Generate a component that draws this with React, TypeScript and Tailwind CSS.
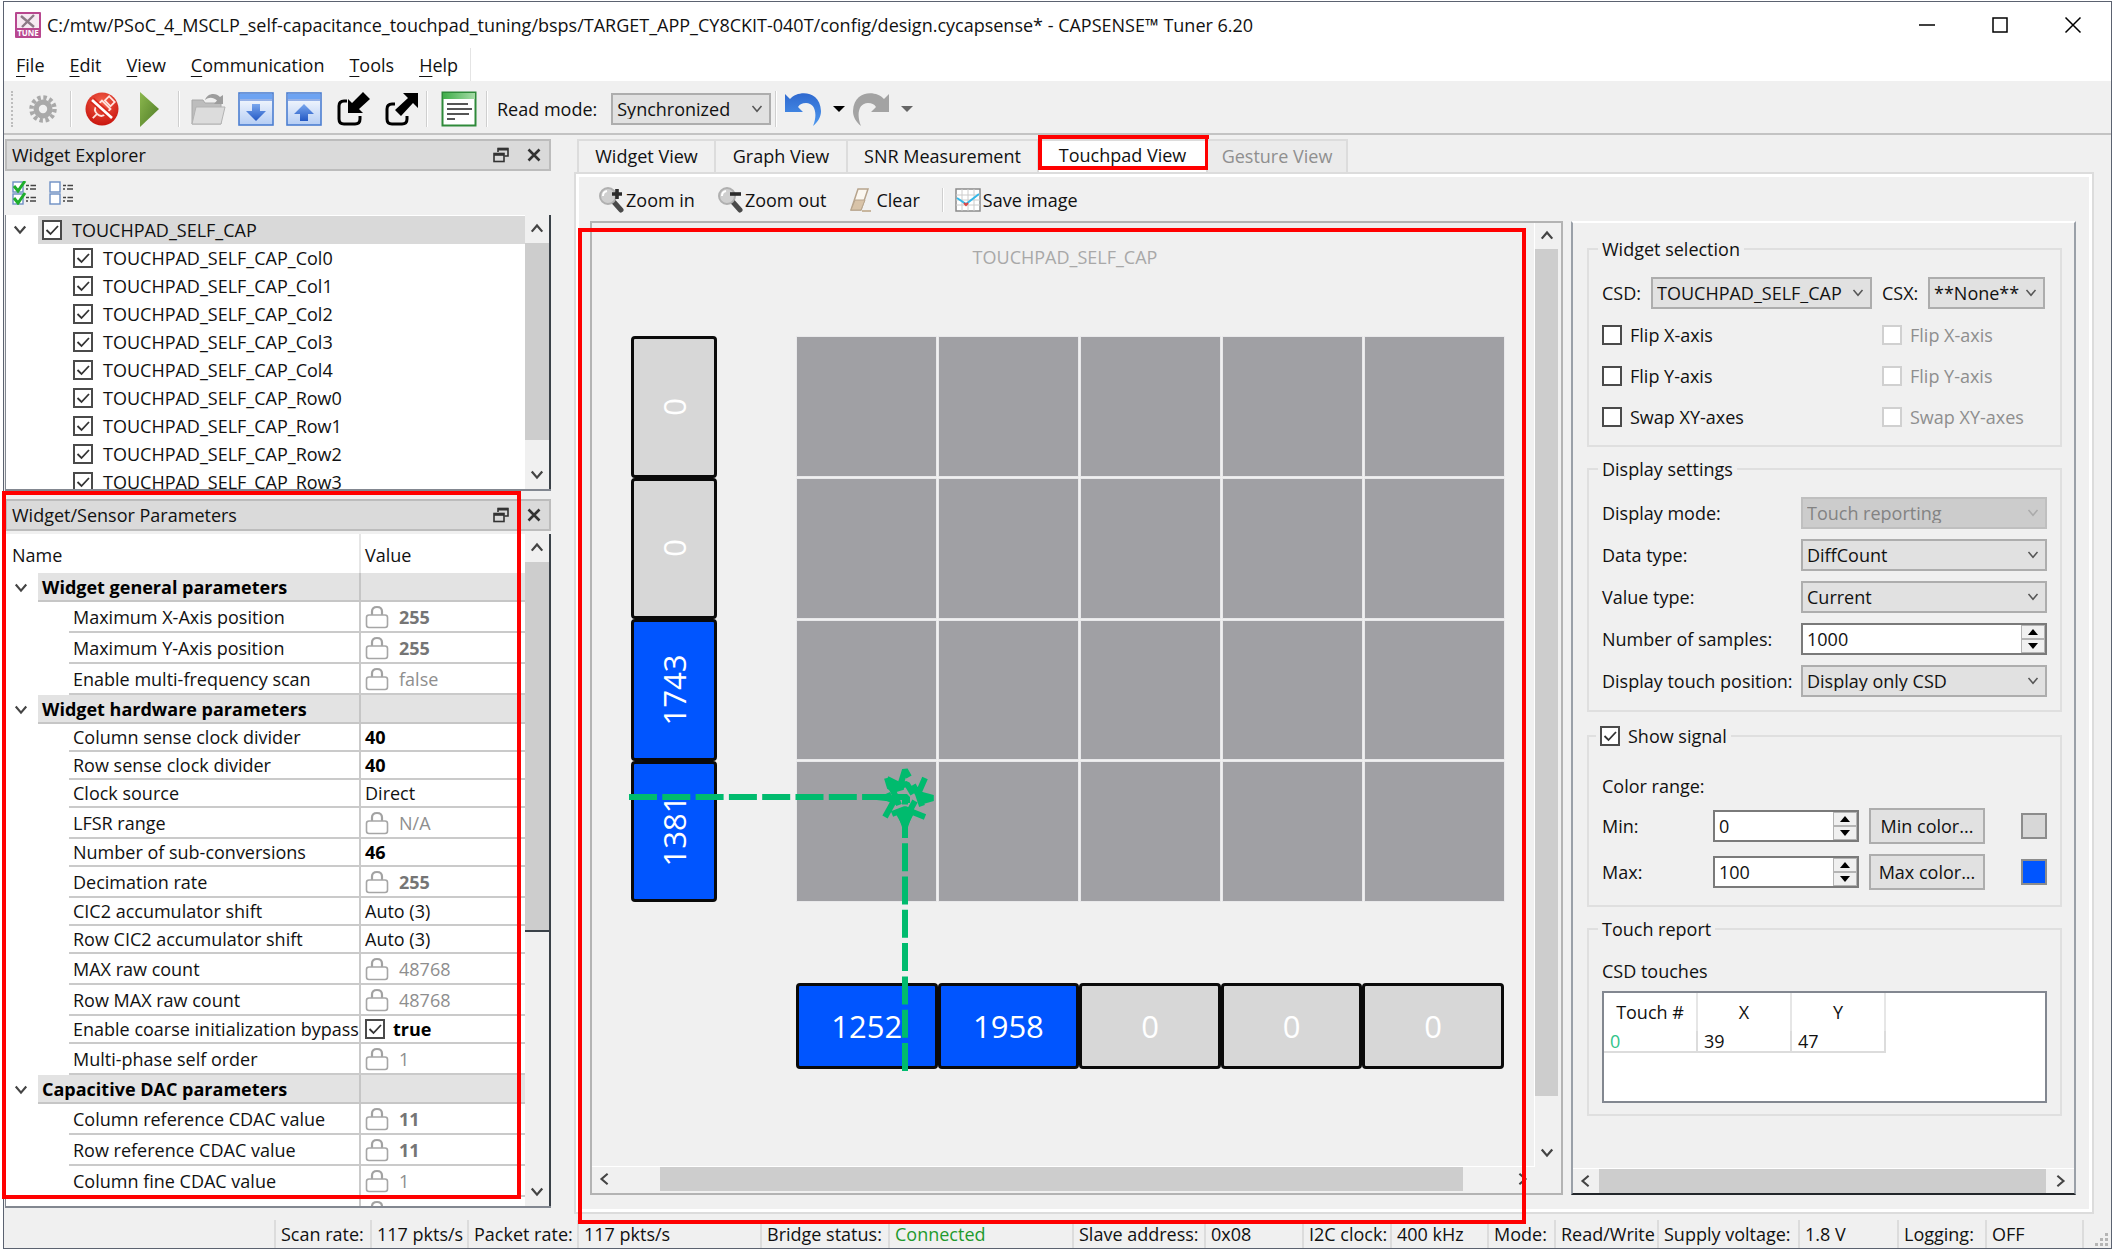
import { useState, type ReactNode } from "react";

/* ---------- small shared pieces ---------- */

type Dir = "up" | "down" | "left" | "right";

const CHEVRONS: Record<Dir, string> = {
  up: "M2 11 L8 4 L14 11",
  down: "M2 4 L8 11 L14 4",
  left: "M11 2 L4 8 L11 14",
  right: "M5 2 L12 8 L5 14",
};

function Chevron({ dir, className, width = 2 }: { dir: Dir; className: string; width?: number }) {
  return (
    <svg viewBox="0 0 16 16" className={className} fill="none" stroke="currentColor" strokeWidth={width} aria-hidden="true">
      <path d={CHEVRONS[dir]} />
    </svg>
  );
}

function Check({
  label,
  checked = false,
  disabled = false,
  className = "",
  labelClass = "",
}: {
  label: string;
  checked?: boolean;
  disabled?: boolean;
  className?: string;
  labelClass?: string;
}) {
  const [on, setOn] = useState(checked);
  return (
    <label className={`flex items-center ${disabled ? "text-[#8e8e8e]" : ""} ${className}`}>
      <span className="relative block h-5 w-5 shrink-0">
        <input
          type="checkbox"
          checked={on}
          disabled={disabled}
          onChange={() => setOn(!on)}
          className="block h-5 w-5 appearance-none border-2 border-[#4a4a4a] bg-white disabled:border-[#d0d0d0]"
        />
        {on && (
          <svg viewBox="0 0 20 20" className="pointer-events-none absolute inset-0 h-5 w-5" fill="none" stroke="#333" strokeWidth="1.8" aria-hidden="true">
            <path d="M4.5 10 L8.5 14 L16 6" />
          </svg>
        )}
      </span>
      <span className={`whitespace-nowrap ${labelClass}`}>{label}</span>
    </label>
  );
}

function Select({ label, value, options = [], disabled = false, className = "" }: { label: string; value: string; options?: string[]; disabled?: boolean; className?: string }) {
  return (
    <span className={`relative block h-8 ${className}`}>
      <select
        aria-label={label}
        disabled={disabled}
        defaultValue={value}
        className="block h-full w-full appearance-none border-2 border-[#adadad] bg-[#e1e1e1] pl-1 text-lg leading-5 disabled:border-[#bfbfbf] disabled:bg-[#cccccc] disabled:text-[#838383] disabled:opacity-100"
      >
        <option>{value}</option>
        {options.map((o) => (
          <option key={o}>{o}</option>
        ))}
      </select>
      <Chevron dir="down" width={2} className={`pointer-events-none absolute top-2.5 right-2 h-3 w-3 ${disabled ? "text-[#aaa]" : "text-[#555]"}`} />
    </span>
  );
}

function Spin({ label, value, className = "" }: { label: string; value: string; className?: string }) {
  const [v, setV] = useState(value);
  const step = (d: number) => setV(String(Number(v) + d));
  return (
    <span className={`flex h-8 border-2 border-[#7a7a7a] bg-white ${className}`}>
      <input aria-label={label} value={v} onChange={(e) => setV(e.target.value)} className="min-w-0 flex-1 bg-transparent pl-1 text-lg leading-5 outline-none" />
      <span className="flex w-6 flex-col">
        <button type="button" aria-label={`${label} up`} onClick={() => step(1)} className="flex flex-1 items-center justify-center border border-[#b4b4b4] bg-[#f0f0f0]">
          <svg viewBox="0 0 10 6" className="h-1.5 w-2.5" aria-hidden="true"><path d="M0 6 L5 0 L10 6Z" /></svg>
        </button>
        <button type="button" aria-label={`${label} down`} onClick={() => step(-1)} className="flex flex-1 items-center justify-center border border-[#b4b4b4] bg-[#f0f0f0]">
          <svg viewBox="0 0 10 6" className="h-1.5 w-2.5" aria-hidden="true"><path d="M0 0 L5 6 L10 0Z" /></svg>
        </button>
      </span>
    </span>
  );
}

function Highlight({ className }: { className: string }) {
  return <div className={`pointer-events-none absolute border-4 border-[#ff0000] ${className}`} />;
}

/* ---------- title, menu, toolbar ---------- */

function TitleBar() {
  return (
    <header className="flex h-[46px] items-center bg-white pr-[29px] pl-[11px]">
      <svg viewBox="0 0 26 26" className="h-[26px] w-[26px] shrink-0" aria-hidden="true">
        <rect width="26" height="26" rx="1" fill="#b8478f" />
        <rect x="2" y="2" width="22" height="14" fill="#f6eaf2" />
        <path d="M6 4 L19 15 M19 3 L7 15" stroke="#8c7a86" strokeWidth="2.4" />
        <text x="13" y="24" textAnchor="middle" fontSize="8" fontWeight="700" fill="#fff" fontFamily="Open Sans">TUNE</text>
      </svg>
      <h1 className="ml-1.5 flex-1 whitespace-nowrap">
        C:/mtw/PSoC_4_MSCLP_self-capacitance_touchpad_tuning/bsps/TARGET_APP_CY8CKIT-040T/config/design.cycapsense* - CAPSENSE™ Tuner 6.20
      </h1>
      <div className="flex gap-[55px]">
        <button type="button" aria-label="Minimize" className="h-[18px] w-[18px]">
          <svg viewBox="0 0 18 18" stroke="#000" strokeWidth="1.5"><path d="M1 9H17" /></svg>
        </button>
        <button type="button" aria-label="Maximize" className="h-[18px] w-[18px]">
          <svg viewBox="0 0 18 18" stroke="#000" strokeWidth="1.5" fill="none"><rect x="2" y="2" width="14" height="14" /></svg>
        </button>
        <button type="button" aria-label="Close" className="h-[18px] w-[18px]">
          <svg viewBox="0 0 18 18" stroke="#000" strokeWidth="1.5"><path d="M1.5 1.5 L16.5 16.5 M16.5 1.5 L1.5 16.5" /></svg>
        </button>
      </div>
    </header>
  );
}

function MenuBar() {
  const items = ["File", "Edit", "View", "Communication", "Tools", "Help"];
  return (
    <nav className="flex h-[33px] bg-white pl-3">
      <div className="flex items-center gap-[25px] border-r border-[#e4e4e4] pr-3">
        {items.map((m) => (
          <button key={m} type="button" className="whitespace-nowrap">
            <span className="underline decoration-1 underline-offset-4">{m[0]}</span>
            {m.slice(1)}
          </button>
        ))}
      </div>
    </nav>
  );
}

function ToolButton({ label, children, className = "" }: { label: string; children: ReactNode; className?: string }) {
  return (
    <button type="button" aria-label={label} className={`h-9 w-9 shrink-0 ${className}`}>
      <svg viewBox="0 0 36 36" className="h-9 w-9" fill="none" aria-hidden="true">{children}</svg>
    </button>
  );
}

function Divider({ className = "" }: { className?: string }) {
  return <span className={`w-0.5 shrink-0 border-l border-[#cfcfcf] bg-white ${className}`} />;
}

function WindowGlyph() {
  return (
    <>
      <rect x="1" y="2" width="34" height="32" fill="url(#panelBlue)" stroke="#4d7fd1" strokeWidth="1.6" />
      <rect x="2" y="3" width="32" height="5" fill="#6da3f2" />
      <path d="M2 9H34" stroke="#3f6fd0" />
    </>
  );
}

function Toolbar() {
  return (
    <div className="flex h-[54px] shrink-0 items-center border-b-2 border-[#c3c3c3] pt-1 pl-[7px]">
      <svg width="0" height="0" className="absolute" aria-hidden="true">
        <defs>
          <linearGradient id="panelBlue" x1="0" y1="0" x2="0" y2="1"><stop offset="0" stopColor="#fff" /><stop offset="1" stopColor="#b5cdf4" /></linearGradient>
          <linearGradient id="arrowBlue" x1="0" y1="0" x2="0" y2="1"><stop offset="0" stopColor="#79a7ee" /><stop offset="1" stopColor="#2358c4" /></linearGradient>
          <radialGradient id="stopRed" cx="0.5" cy="0.3" r="0.7"><stop offset="0" stopColor="#f4604a" /><stop offset="1" stopColor="#c9150e" /></radialGradient>
          <linearGradient id="playGreen" x1="0" y1="0" x2="1" y2="1"><stop offset="0" stopColor="#8cb84e" /><stop offset="1" stopColor="#4e7a26" /></linearGradient>
          <linearGradient id="docGreen" x1="0" y1="0" x2="1" y2="0"><stop offset="0" stopColor="#3fae49" /><stop offset="1" stopColor="#a5dba6" /></linearGradient>
          <linearGradient id="undoBlue" x1="0" y1="0" x2="0" y2="1"><stop offset="0" stopColor="#2f69cf" /><stop offset="1" stopColor="#4c97ee" /></linearGradient>
        </defs>
      </svg>
      <span className="h-9 border-l-2 border-dotted border-[#bdbdbd]" />
      <ToolButton label="Settings" className="ml-3">
        <circle cx="18" cy="18" r="9.5" fill="#a9a9a9" />
        <circle cx="18" cy="18" r="11.5" stroke="#a9a9a9" strokeWidth="4.5" strokeDasharray="3.4 2.62" />
        <circle cx="18" cy="18" r="4.2" fill="#f0f0f0" />
      </ToolButton>
      <Divider className="ml-[9px] h-9" />
      <ToolButton label="Disconnect" className="ml-3">
        <circle cx="18" cy="18" r="16.5" fill="url(#stopRed)" />
        <g transform="rotate(45 18 18)" stroke="#ffe3de" strokeWidth="1.8">
          <rect x="14" y="4" width="8" height="6" />
          <path d="M12 12 H24 V19 Q24 25 18 25 Q12 25 12 19Z M18 25V31" />
        </g>
        <path d="M8 9 L28 27" stroke="#d8281c" strokeWidth="6" />
        <path d="M8 9 L28 27" stroke="#fff" strokeWidth="2.6" />
      </ToolButton>
      <ToolButton label="Start" className="ml-4">
        <path d="M4 1 L23 18 L4 36Z" fill="url(#playGreen)" />
      </ToolButton>
      <Divider className="ml-[6px] h-9" />
      <ToolButton label="Open" className="ml-[10px]">
        <path d="M2 33 V9 H13 L15 12 H31 V33Z" fill="#bdbdbd" stroke="#a8a8a8" />
        <path d="M2 33 L6 16 H35 L31 33Z" fill="#dcdcdc" stroke="#b3b3b3" />
        <path d="M15 9 C17 2 26 1 30 6 L33 4 V13 H24 L27 9.500 C23 6 19 6 15 9Z" fill="#9d9d9d" />
      </ToolButton>
      <ToolButton label="Read from device" className="ml-3">
        <WindowGlyph />
        <path d="M14 13 H22 V20 H28 L18 30 L8 20 H14Z" fill="url(#arrowBlue)" />
      </ToolButton>
      <ToolButton label="Write to device" className="ml-3">
        <WindowGlyph />
        <path d="M14 30 H22 V23 H28 L18 13 L8 23 H14Z" fill="url(#arrowBlue)" />
      </ToolButton>
      <ToolButton label="Import" className="ml-[13px]">
        <path d="M12 10 H9 Q4 10 4 15 V28 Q4 33 9 33 H20 Q25 33 25 28 V25" stroke="#000" strokeWidth="3" />
        <path d="M28 1 L35 8 L24 18 L28 22 H13 V8 L17 12Z" fill="#000" />
      </ToolButton>
      <ToolButton label="Export" className="ml-3">
        <path d="M12 13 H9 Q4 13 4 18 V28 Q4 33 9 33 H19 Q24 33 24 28 V25" stroke="#000" strokeWidth="3" />
        <path d="M12 19 L25 7 L20 2 H35 V17 L30 12 L18 25Z" fill="#000" />
      </ToolButton>
      <Divider className="ml-[7px] h-9" />
      <ToolButton label="Log" className="ml-[13px]">
        <rect x="1.500" y="1.500" width="33" height="33" fill="#fff" stroke="#2f8a3a" strokeWidth="2" />
        <rect x="2" y="2" width="32" height="6" fill="url(#docGreen)" />
        <path d="M6 13H27 M6 18H31 M6 23H28 M6 28H14" stroke="#555" strokeWidth="2.2" />
      </ToolButton>
      <Divider className="ml-[9px] h-9" />
      <label htmlFor="read-mode" className="ml-[9px] whitespace-nowrap">Read mode:</label>
      <span className="relative ml-3.5 block h-8 w-[160px] shrink-0">
        <select id="read-mode" className="block h-full w-full appearance-none border-2 border-[#adadad] bg-[#e1e1e1] pl-1 text-lg leading-5">
          <option>Synchronized</option>
          <option>Asynchronous</option>
        </select>
        <Chevron dir="down" className="pointer-events-none absolute top-2.5 right-2 h-3 w-3 text-[#555]" />
      </span>
      <Divider className="ml-1 h-9" />
      <ToolButton label="Undo" className="ml-2">
        <path d="M0 3 L5 8 C13 -1 35 -1 36 20 C36 26 33 31 28 35 C33 23 30 12 21 12 C17 12 15 13 13 16 L18 21 H0Z" fill="url(#undoBlue)" />
      </ToolButton>
      <svg viewBox="0 0 12 6" className="ml-3 h-1.5 w-3 shrink-0" aria-hidden="true"><path d="M0 0H12L6 6Z" /></svg>
      <ToolButton label="Redo" className="ml-2">
        <path d="M36 3 L31 8 C23 -1 1 -1 0 20 C0 26 3 31 8 35 C3 23 6 12 15 12 C19 12 21 13 23 16 L18 21 H36Z" fill="#a3a3a3" />
      </ToolButton>
      <svg viewBox="0 0 12 6" className="ml-3 h-1.5 w-3 shrink-0" aria-hidden="true"><path d="M0 0H12L6 6Z" fill="#666" /></svg>
    </div>
  );
}

/* ---------- left column ---------- */

function DockTitle({ title }: { title: string }) {
  return (
    <div className="flex h-8 shrink-0 items-center border-2 border-[#bcbcbc] bg-[#dadada] pr-2 pl-[5px]">
      <h2 className="flex-1 whitespace-nowrap">{title}</h2>
      <button type="button" aria-label={`Float ${title}`} className="h-4 w-4">
        <svg viewBox="0 0 16 16" fill="none" stroke="#333" strokeWidth="1.6">
          <path d="M5 5 V1.500 H15 V9 H11.500" /><path d="M5 2.200H15" strokeWidth="2.600" />
          <rect x="1" y="6.500" width="10" height="8" /><path d="M1 7.500H11" strokeWidth="2.600" />
        </svg>
      </button>
      <button type="button" aria-label={`Close ${title}`} className="ml-[18px] h-3.5 w-3.5">
        <svg viewBox="0 0 14 14" stroke="#333" strokeWidth="2.600"><path d="M1.500 1.500L12.500 12.500M12.500 1.500L1.500 12.500" /></svg>
      </button>
    </div>
  );
}

function ListIcon({ checked }: { checked: boolean }) {
  return (
    <svg viewBox="0 0 25 24" className="h-6 w-[25px]" fill="none" aria-hidden="true">
      {[1, 13].map((y) => (
        <g key={y}>
          <rect x="1" y={y} width="10" height="10" fill="#fff" stroke="#6d8fc4" strokeWidth="1.4" />
          <path d={`M14 ${y + 3.500}H17 M18.500 ${y + 3.500}H24 M14 ${y + 7}H16 M18 ${y + 7}H24`} stroke="#444" strokeWidth="1.600" />
          {checked && <path d={`M2 ${y + 4}L6 ${y + 9}L13 ${y - 1}`} stroke="#1fae2c" strokeWidth="3" />}
        </g>
      ))}
    </svg>
  );
}

function VScroll({ thumb }: { thumb: string }) {
  return (
    <div className="flex w-[26px] shrink-0 flex-col border-r-2 border-[#3a4148] bg-[#f0f0f0]">
      <button type="button" aria-label="Scroll up" className="flex h-7 shrink-0 items-center justify-center">
        <Chevron dir="up" width={2.600} className="h-3.5 w-3.5 text-[#444]" />
      </button>
      <div className={`bg-[#cdcdcd] ${thumb}`} />
      <div className="flex-1" />
      <button type="button" aria-label="Scroll down" className="flex h-7 shrink-0 items-center justify-center">
        <Chevron dir="down" width={2.600} className="h-3.5 w-3.5 text-[#444]" />
      </button>
    </div>
  );
}

const SENSORS = ["Col0", "Col1", "Col2", "Col3", "Col4", "Row0", "Row1", "Row2", "Row3"];

function WidgetExplorer() {
  return (
    <section className="shrink-0">
      <DockTitle title="Widget Explorer" />
      <div className="flex h-11 items-center gap-3 pl-[7px]">
        <button type="button" aria-label="Check all"><ListIcon checked /></button>
        <button type="button" aria-label="Uncheck all"><ListIcon checked={false} /></button>
      </div>
      <div className="flex h-[276px] overflow-hidden border-b-2 border-l border-[#828790] bg-white">
        <ul className="min-w-0 flex-1 overflow-hidden pt-px">
          <li className="flex h-7 items-center">
            <span className="flex w-8 shrink-0 justify-center pr-1"><Chevron dir="down" width={2.600} className="h-3.5 w-3.5 text-[#444]" /></span>
            <Check label="TOUCHPAD_SELF_CAP" checked className="h-full flex-1 bg-[#d9d9d9] pl-1" labelClass="pl-2.5" />
          </li>
          {SENSORS.map((s) => (
            <li key={s} className="h-7">
              <Check label={`TOUCHPAD_SELF_CAP_${s}`} checked className="h-full pl-[67px]" labelClass="pl-2.5" />
            </li>
          ))}
        </ul>
        <VScroll thumb="h-[197px]" />
      </div>
    </section>
  );
}

type Param = { name: string; value: string; kind?: "lock" | "check" | "group"; bold?: boolean };

const PARAMS: Param[] = [
  { name: "Widget general parameters", value: "", kind: "group" },
  { name: "Maximum X-Axis position", value: "255", kind: "lock", bold: true },
  { name: "Maximum Y-Axis position", value: "255", kind: "lock", bold: true },
  { name: "Enable multi-frequency scan", value: "false", kind: "lock" },
  { name: "Widget hardware parameters", value: "", kind: "group" },
  { name: "Column sense clock divider", value: "40", bold: true },
  { name: "Row sense clock divider", value: "40", bold: true },
  { name: "Clock source", value: "Direct" },
  { name: "LFSR range", value: "N/A", kind: "lock" },
  { name: "Number of sub-conversions", value: "46", bold: true },
  { name: "Decimation rate", value: "255", kind: "lock", bold: true },
  { name: "CIC2 accumulator shift", value: "Auto (3)" },
  { name: "Row CIC2 accumulator shift", value: "Auto (3)" },
  { name: "MAX raw count", value: "48768", kind: "lock" },
  { name: "Row MAX raw count", value: "48768", kind: "lock" },
  { name: "Enable coarse initialization bypass", value: "true", kind: "check", bold: true },
  { name: "Multi-phase self order", value: "1", kind: "lock" },
  { name: "Capacitive DAC parameters", value: "", kind: "group" },
  { name: "Column reference CDAC value", value: "11", kind: "lock", bold: true },
  { name: "Row reference CDAC value", value: "11", kind: "lock", bold: true },
  { name: "Column fine CDAC value", value: "1", kind: "lock" },
  { name: "", value: "", kind: "lock" },
];

function LockIcon() {
  return (
    <svg viewBox="0 0 24 24" className="h-6 w-6 shrink-0" fill="none" aria-hidden="true">
      <path d="M7 10 V6.500 Q7 2 12 2 Q17 2 17 6.500 V10" stroke="#a2a2a2" strokeWidth="2.200" />
      <rect x="1.500" y="10" width="21" height="12.500" rx="2.500" fill="#fff" stroke="#a6a6a6" strokeWidth="1.600" />
    </svg>
  );
}

function ParamRow({ p }: { p: Param }) {
  if (p.kind === "group") {
    return (
      <tr className="h-[29px]">
        <td><Chevron dir="down" width={2.400} className="ml-2 h-3.5 w-3.5 text-[#444]" /></td>
        <th colSpan={2} scope="rowgroup" className="border-b-2 border-[#c6c6c6] bg-[#e3e3e3] pl-1 text-left font-bold whitespace-nowrap text-black">{p.name}</th>
        <td className="border-b-2 border-l-2 border-[#c6c6c6] bg-[#e3e3e3]" />
      </tr>
    );
  }
  const tone = p.kind === "lock" ? (p.bold ? "font-bold text-[#757575]" : "text-[#8e8e8e]") : p.bold ? "font-bold text-black" : "";
  return (
    <tr className={p.kind === "lock" ? "h-[31px]" : "h-7"}>
      <td colSpan={2} />
      <td className="border-b-2 border-[#cacaca] pl-1 whitespace-nowrap">{p.name}</td>
      <td className={`border-b-2 border-l-2 border-[#cacaca] pl-1 whitespace-nowrap ${tone}`}>
        {p.kind === "lock" ? (
          <span className="flex h-6 items-center gap-2.5"><LockIcon />{p.value}</span>
        ) : p.kind === "check" ? (
          <Check label={p.value} checked labelClass="pl-2" />
        ) : (
          p.value
        )}
      </td>
    </tr>
  );
}

function ParametersPanel() {
  return (
    <section className="relative mt-2 flex min-h-0 flex-1 flex-col">
      <DockTitle title="Widget/Sensor Parameters" />
      <div className="mt-[3px] flex min-h-0 flex-1 border-b-2 border-l border-[#828790] bg-white">
        <div className="min-w-0 flex-1 overflow-hidden">
          <table className="w-full table-fixed border-separate border-spacing-0">
            <colgroup>
              <col className="w-8" />
              <col className="w-[31px]" />
              <col className="w-[290px]" />
              <col />
            </colgroup>
            <thead>
              <tr className="h-[39px]">
                <th colSpan={3} scope="col" className="pt-0.5 pl-1.5 text-left font-normal">Name</th>
                <th scope="col" className="border-l-2 border-[#e6e6e6] pt-0.5 pl-1 text-left font-normal">Value</th>
              </tr>
            </thead>
            <tbody>
              {PARAMS.map((p) => (
                <ParamRow key={p.name} p={p} />
              ))}
            </tbody>
          </table>
        </div>
        <VScroll thumb="h-[370px] border-b-2 border-[#3a4148]" />
      </div>
      <Highlight className="-top-2 bottom-[9px] -left-[3px] w-[519px]" />
    </section>
  );
}

/* ---------- touchpad canvas ---------- */

function Sensor({ value, vertical = false }: { value: string; vertical?: boolean }) {
  const active = Number(value) > 0;
  return (
    <div
      className={`flex items-center justify-center rounded-sm border-3 border-[#0a0a0a] text-[31px] leading-9 text-white ${
        active ? "bg-[#0055ff]" : "bg-[#d7d7d7]"
      } ${vertical ? "" : "h-[86px]"}`}
    >
      <span className={vertical ? "-rotate-90" : ""}>{value}</span>
    </div>
  );
}

function TouchpadPlot() {
  return (
    <div className="min-w-0 flex-1 overflow-hidden">
      <p className="pt-[22px] pl-1 text-center text-[#a8a8a8]">TOUCHPAD_SELF_CAP</p>
      <div className="relative mt-[67px] ml-[39px] grid w-[873px] grid-cols-[86px_708px] justify-between gap-y-[81px]">
        <div className="grid h-[566px] grid-rows-4">
          {["0", "0", "1743", "1381"].map((v, i) => (
            <Sensor key={i} value={v} vertical />
          ))}
        </div>
        <div className="grid grid-cols-5 grid-rows-4 gap-[3px] py-px pl-px">
          {Array.from({ length: 20 }, (_, i) => (
            <div key={i} className="bg-[#a0a0a4] outline-1 outline-[#e8e8ea]" />
          ))}
        </div>
        <div />
        <div className="grid grid-cols-5">
          {["1252", "1958", "0", "0", "0"].map((v, i) => (
            <Sensor key={i} value={v} />
          ))}
        </div>
        <svg viewBox="-2 0 480 736" className="pointer-events-none absolute top-0 -left-0.5 h-[736px] w-[480px]" fill="none" stroke="#00bb6e" aria-hidden="true">
          <path d="M-2 461H276" strokeWidth="6" strokeDasharray="28 5.300" />
          <path d="M274 735V461" strokeWidth="6" strokeDasharray="28 5.300" />
          <g transform="translate(274 461)" strokeWidth="6" strokeLinejoin="bevel">
            <path d="M-5 -11 L0 -27 L4 -20 M-18 -19 L-15 -9 L2 -13 L8 -3 M-18 -18 L-2 -10 L-12 -7 M20 -19 L13 -3 L17 9 M8 -12 L13 -3 L28 1 L14 5" />
            <path d="M-28 0 L-10 2 L-20 20 M-16 -14 L-10 -2 L-6 8 M-13 17 L0 12 L20 20 M-8 13 L0 27 L8 12 M10 4 L4 15 M-4 0 H2 V6" />
            <path d="M-26 0 L-15 -5 L-8 8 L-16 5Z M-9 13 H9 L3 30 H-3Z" fill="#00bb6e" stroke="none" />
          </g>
        </svg>
      </div>
    </div>
  );
}

function CanvasFrame() {
  return (
    <div className="flex min-w-0 flex-1 flex-col border-2 border-[#b3b3b3]">
      <div className="flex min-h-0 flex-1">
        <TouchpadPlot />
        <div className="flex w-[27px] shrink-0 flex-col border-l border-white pr-[3px]">
          <button type="button" aria-label="Scroll up" className="flex h-[26px] items-center justify-center"><Chevron dir="up" width={2.600} className="h-3.5 w-3.5 text-[#444]" /></button>
          <div className="flex-1 bg-[#cdcdcd]" />
          <button type="button" aria-label="Scroll down" className="flex h-[70px] items-end justify-center pb-1.5"><Chevron dir="down" width={2.600} className="h-3.5 w-3.5 text-[#444]" /></button>
        </div>
      </div>
      <div className="mr-[26px] mb-0.5 flex h-[25px] shrink-0 items-stretch border-t border-white">
        <button type="button" aria-label="Scroll left" className="flex w-[68px] items-center pl-1.5"><Chevron dir="left" width={2.400} className="h-3.5 w-3.5 text-[#444]" /></button>
        <div className="flex-1 bg-[#cdcdcd]" />
        <button type="button" aria-label="Scroll right" className="flex w-[72px] items-center justify-end pr-1.5"><Chevron dir="right" width={2.400} className="h-3.5 w-3.5 text-[#444]" /></button>
      </div>
    </div>
  );
}

/* ---------- right settings panel ---------- */

function Group({ title, children, className = "", legendClass = "-ml-1 px-1" }: { title: ReactNode; children: ReactNode; className?: string; legendClass?: string }) {
  return (
    <fieldset className={`min-w-0 border-2 border-[#dfdfdf] px-[13px] ${className}`}>
      <legend className={`h-6 ${legendClass}`}>{title}</legend>
      {children}
    </fieldset>
  );
}

function SettingsPanel() {
  const axes = ["Flip X-axis", "Flip Y-axis", "Swap XY-axes"];
  return (
    <aside className="ml-2 flex w-[505px] shrink-0 flex-col border-2 border-t-white border-r-[#9aa0a8] border-b-[#22262a] border-l-[#9aa0a8]">
      <div className="flex min-h-0 flex-1 flex-col overflow-hidden pt-3.5 pr-3 pl-3.5">
        <Group title="Widget selection" className="h-[210px] shrink-0">
          <div className="mt-4 flex items-center">
            <span className="w-[49px]">CSD:</span>
            <Select label="CSD" value="TOUCHPAD_SELF_CAP" className="w-[221px]" />
            <span className="ml-2.5 w-[46px]">CSX:</span>
            <Select label="CSX" value="**None**" className="w-[117px]" />
          </div>
          <div className="mt-2.5 grid grid-cols-[280px_1fr] gap-y-[9px]">
            {axes.map((a) => [
              <Check key={`csd-${a}`} label={a} className="h-8" labelClass="pl-2" />,
              <Check key={`csx-${a}`} label={a} disabled className="h-8" labelClass="pl-2" />,
            ])}
          </div>
        </Group>
        <Group title="Display settings" className="mt-2.5 h-[255px] shrink-0">
          <div className="mt-4 grid grid-cols-[1fr_246px] items-center gap-y-2.5">
            <span>Display mode:</span>
            <Select label="Display mode" value="Touch reporting" disabled />
            <span>Data type:</span>
            <Select label="Data type" value="DiffCount" options={["RawCount"]} />
            <span>Value type:</span>
            <Select label="Value type" value="Current" options={["Max"]} />
            <span>Number of samples:</span>
            <Spin label="Number of samples" value="1000" />
            <span className="whitespace-nowrap">Display touch position:</span>
            <Select label="Display touch position" value="Display only CSD" />
          </div>
        </Group>
        <Group title={<Check label="Show signal" checked labelClass="pl-2" />} legendClass="-ml-1.5 px-1" className="mt-3 h-[183px] shrink-0">
          <p className="mt-[26px] h-6">Color range:</p>
          {[
            { n: "Min", v: "0", swatch: "bg-[#d7d7d7]" },
            { n: "Max", v: "100", swatch: "bg-[#0055ff]" },
          ].map((r) => (
            <div key={r.n} className="mt-2.5 flex h-9 items-center">
              <span className="w-[111px]">{r.n}:</span>
              <Spin label={r.n} value={r.v} className="w-[146px]" />
              <button type="button" className="ml-2.5 h-9 w-[116px] border-2 border-[#adadad] bg-[#e1e1e1] whitespace-nowrap">{r.n} color...</button>
              <span className={`ml-auto h-[26px] w-[26px] border-2 border-[#8c8c8c] ${r.swatch}`} />
            </div>
          ))}
        </Group>
        <Group title="Touch report" className="mt-2.5 h-[199px] shrink-0">
          <p className="mt-[18px] h-6">CSD touches</p>
          <div className="mt-2 h-[112px] border-2 border-[#828790] bg-white">
            <table className="w-[282px] table-fixed border-separate border-spacing-0">
              <thead>
                <tr className="h-[38px]">
                  {["Touch #", "X", "Y"].map((h) => (
                    <th key={h} scope="col" className="border-r-2 border-[#e6e6e6] font-normal">{h}</th>
                  ))}
                </tr>
              </thead>
              <tbody>
                <tr className="h-[22px]">
                  {["0", "39", "47"].map((c, i) => (
                    <td key={c} className={`border-r-2 border-b-2 border-[#dcdcdc] pl-1.5 leading-5 ${i === 0 ? "text-[#2fc48a]" : ""}`}>{c}</td>
                  ))}
                </tr>
              </tbody>
            </table>
          </div>
        </Group>
      </div>
      <div className="flex h-[25px] shrink-0 border-t border-white">
        <button type="button" aria-label="Scroll settings left" className="flex w-[26px] items-center justify-center"><Chevron dir="left" width={2.400} className="h-3.5 w-3.5 text-[#444]" /></button>
        <div className="flex-1 bg-[#cdcdcd]" />
        <button type="button" aria-label="Scroll settings right" className="flex w-7 items-center justify-center"><Chevron dir="right" width={2.400} className="h-3.5 w-3.5 text-[#444]" /></button>
      </div>
    </aside>
  );
}

/* ---------- tab area ---------- */

const TABS = [
  { name: "Widget View", width: "w-[139px]" },
  { name: "Graph View", width: "w-[132px]" },
  { name: "SNR Measurement", width: "w-[191px]" },
  { name: "Touchpad View", width: "w-[169px]" },
  { name: "Gesture View", width: "w-[140px]" },
];

function ViewButton({ label, children, className = "" }: { label: string; children: ReactNode; className?: string }) {
  return (
    <button type="button" className={`flex items-center gap-0.5 whitespace-nowrap ${className}`}>
      <svg viewBox="0 0 26 26" className="h-[26px] w-[26px]" fill="none" aria-hidden="true">{children}</svg>
      {label}
    </button>
  );
}

function Magnifier({ sign }: { sign: string }) {
  return (
    <>
      <path d="M15 14 L23 23" stroke="#4a4a4a" strokeWidth="5" strokeLinecap="round" />
      <circle cx="10" cy="9" r="8" fill="#cfcfcf" stroke="#b0b0b0" strokeWidth="2" />
      <path d="M5 9 A5 5 0 0 1 9 4" stroke="#fff" strokeWidth="2" />
      <path d={sign} stroke="#2b2b2b" strokeWidth="3.600" />
    </>
  );
}

function MainArea() {
  return (
    <main className="flex min-w-0 flex-1 flex-col pt-1 pr-[17px] pb-1 pl-[23px]">
      <div role="tablist" className="flex h-[33px] shrink-0 items-end pl-[3px]">
        {TABS.map((t) => {
          const selected = t.name === "Touchpad View";
          const disabled = t.name === "Gesture View";
          return (
            <button
              key={t.name}
              type="button"
              role="tab"
              aria-selected={selected}
              disabled={disabled}
              className={`relative h-full border-t-2 border-r-2 border-[#dcdcdc] whitespace-nowrap first:border-l-2 ${t.width} ${
                selected ? "bg-white pb-1" : disabled ? "bg-[#ebebeb] pb-0.5 text-[#8f8f8f]" : "pb-0.5"
              }`}
            >
              {t.name}
              {selected && <Highlight className="-top-1.5 right-[-3px] bottom-0.5 -left-px" />}
            </button>
          );
        })}
      </div>
      <div className="relative flex min-h-0 flex-1 flex-col border-2 border-[#dcdcdc]">
        <div className="flex min-h-0 flex-1 flex-col border-3 border-white pr-[13px] pb-3.5 pl-[11px]">
          <div className="flex h-11 shrink-0 items-center pt-0.5 pl-2">
            <ViewButton label="Zoom in"><Magnifier sign="M14 7H24M19 2V12" /></ViewButton>
            <ViewButton label="Zoom out" className="ml-[22px]"><Magnifier sign="M13 7H24" /></ViewButton>
            <ViewButton label="Clear" className="ml-[22px]">
              <path d="M10 2 H20 L13 23 H3Z" fill="#fbf7f0" stroke="#b7a48c" strokeWidth="1.500" />
              <path d="M7 13 H17 L13 23 H3Z" fill="#d8c3a8" stroke="#b7a48c" />
              <path d="M14 24H23" stroke="#c8b69e" strokeWidth="2" />
            </ViewButton>
            <Divider className="ml-[22px] h-6" />
            <ViewButton label="Save image" className="ml-[11px]">
              <rect x="1" y="2" width="24" height="22" fill="#fff" stroke="#8a8a8a" strokeWidth="1.500" />
              <path d="M7 2V24M13 2V24M19 2V24M1 8H25M1 13H25M1 18H25" stroke="#ccc" />
              <path d="M2 11 L11 17 L24 7" stroke="#35b8e8" strokeWidth="2" />
              <path d="M9 16 L11 18 L13 16" stroke="#d44" strokeWidth="2" />
            </ViewButton>
          </div>
          <div className="flex min-h-0 flex-1">
            <CanvasFrame />
            <SettingsPanel />
          </div>
        </div>
        <Highlight className="top-[54px] right-[566px] -bottom-3 left-0.5" />
      </div>
    </main>
  );
}

/* ---------- status bar ---------- */

const STATUS: { text: string; width: string; tone?: string }[] = [
  { text: "Scan rate:", width: "w-24" },
  { text: "117 pkts/s", width: "w-[97px]" },
  { text: "Packet rate:", width: "w-[110px]" },
  { text: "117 pkts/s", width: "w-[183px]" },
  { text: "Bridge status:", width: "w-32" },
  { text: "Connected", width: "w-[184px]", tone: "text-[#1f9a2e]" },
  { text: "Slave address:", width: "w-[132px]" },
  { text: "0x08", width: "w-[98px]" },
  { text: "I2C clock:", width: "w-[88px]" },
  { text: "400 kHz", width: "w-[97px]" },
  { text: "Mode:", width: "w-[67px]" },
  { text: "Read/Write", width: "w-[103px]" },
  { text: "Supply voltage:", width: "w-[141px]" },
  { text: "1.8 V", width: "w-[99px]" },
  { text: "Logging:", width: "w-[88px]" },
  { text: "OFF", width: "w-[97px]" },
];

function StatusBar() {
  return (
    <footer className="flex h-[30px] shrink-0 items-stretch justify-end pt-0.5">
      {STATUS.map((s, i) => (
        <span key={i} className={`flex shrink-0 items-center border-l-2 border-[#dcdcdc] pl-[5px] whitespace-nowrap ${s.width} ${s.tone ?? ""}`}>{s.text}</span>
      ))}
      <span className="flex w-[29px] shrink-0 items-end justify-end border-l-2 border-[#dcdcdc] pr-0.5">
        <svg viewBox="0 0 16 16" className="h-4 w-4" fill="#b5b5b5" aria-hidden="true">
          <path d="M12 1h3v3h-3zM12 6h3v3h-3zM12 11h3v3h-3zM7 6h3v3h-3zM7 11h3v3h-3zM2 11h3v3h-3z" />
        </svg>
      </span>
    </footer>
  );
}

export default function App() {
  return (
    <div className="h-screen overflow-hidden bg-white py-px pl-[3px] font-['Open_Sans',sans-serif] text-lg/6 text-[#111111]">
      <div className="flex h-full flex-col border border-[#5b6270] bg-[#f0f0f0]">
        <TitleBar />
        <MenuBar />
        <Toolbar />
        <div className="flex min-h-0 flex-1">
          <div className="flex w-[547px] shrink-0 flex-col pt-1 pb-2.5 pl-px">
            <WidgetExplorer />
            <ParametersPanel />
          </div>
          <MainArea />
        </div>
        <StatusBar />
      </div>
    </div>
  );
}
